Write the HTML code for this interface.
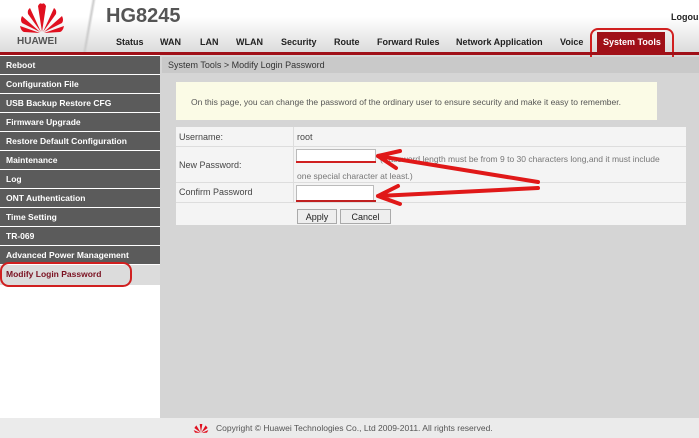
<!DOCTYPE html><html><head><style>
*{margin:0;padding:0;box-sizing:border-box}
body{width:699px;height:438px;overflow:hidden;font-family:"Liberation Sans",sans-serif;background:#d5d5d5;position:relative;font-size:9px}
.a{position:absolute}
#hdr{left:0;top:0;width:699px;height:56px;background:linear-gradient(#fff,#fff 30%,#d8d8d8)}
.nav{top:37px;font-weight:bold;font-size:9px;color:#222}
.side{left:0;width:160px;height:18px;background:#5b5b5b;color:#fff;font-weight:bold;font-size:8.5px;padding:4px 0 0 6px}
td{font-size:9px;color:#444}
</style></head><body>
<div id="hdr" class="a"></div>
<svg class="a" style="left:18px;top:2px" width="48" height="32" viewBox="0 0 48 32"><g fill="#e01020">
<path d="M24 30 L20 4 Q22 0 24 2 Z"/><path d="M24 30 L28 4 Q26 0 24 2 Z"/>
<path d="M23 30 L12 6 Q9 8 10 12 Z"/><path d="M25 30 L36 6 Q39 8 38 12 Z"/>
<path d="M22 30 L4 14 Q2 18 4 21 Z"/><path d="M26 30 L44 14 Q46 18 44 21 Z"/>
<path d="M22 31 L2 24 Q3 29 6 30 Z"/><path d="M26 31 L46 24 Q45 29 42 30 Z"/></g></svg>
<div class="a" style="left:17px;top:36px;font-weight:bold;font-size:10px;color:#555">HUAWEI</div>
<div class="a" style="left:82px;top:0;width:14px;height:54px;background:linear-gradient(100deg,transparent 40%,#ccc 50%,transparent 60%)"></div>
<div class="a" style="left:106px;top:5px;font-weight:bold;font-size:20px;color:#555">HG8245</div>
<div class="a" style="left:671px;top:12px;font-weight:bold;font-size:9px;color:#222">Logou</div>
<div class="a nav" style="left:116px">Status</div><div class="a nav" style="left:160px">WAN</div><div class="a nav" style="left:200px">LAN</div><div class="a nav" style="left:236px">WLAN</div><div class="a nav" style="left:281px">Security</div><div class="a nav" style="left:334px">Route</div><div class="a nav" style="left:377px">Forward Rules</div><div class="a nav" style="left:456px">Network Application</div><div class="a nav" style="left:560px">Voice</div>
<div class="a" style="left:597px;top:32px;width:68px;height:21px;background:#a01018;color:#fff;font-weight:bold;font-size:9px;padding:5px 0 0 6px">System Tools</div>
<div class="a" style="left:590px;top:28px;width:84px;height:37px;border:2px solid #d02020;border-radius:8px"></div>
<div class="a" style="left:0;top:52px;width:699px;height:3px;background:#a01018"></div>
<div class="a" style="left:0;top:55px;width:160px;height:363px;background:#fff"></div>
<div class="a side" style="top:56px">Reboot</div><div class="a side" style="top:75px">Configuration File</div><div class="a side" style="top:94px">USB Backup Restore CFG</div><div class="a side" style="top:113px">Firmware Upgrade</div><div class="a side" style="top:132px">Restore Default Configuration</div><div class="a side" style="top:151px">Maintenance</div><div class="a side" style="top:170px">Log</div><div class="a side" style="top:189px">ONT Authentication</div><div class="a side" style="top:208px">Time Setting</div><div class="a side" style="top:227px">TR-069</div><div class="a side" style="top:246px">Advanced Power Management</div>
<div class="a side" style="top:265px;height:20px;background:#dcdcdc;color:#7a1020">Modify Login Password</div>
<div class="a" style="left:0;top:262px;width:132px;height:25px;border:2px solid #d02020;border-radius:9px"></div>
<div class="a" style="left:162px;top:57px;width:537px;height:16px;background:#c9c9c9;color:#333;padding:3px 0 0 6px">System Tools &gt; Modify Login Password</div>
<div class="a" style="left:176px;top:82px;width:481px;height:38px;background:#fbfbe6;color:#555;padding:15px 0 0 15px;font-size:8.5px">On this page, you can change the password of the ordinary user to ensure security and make it easy to remember.</div>
<div class="a" style="left:176px;top:127px;width:510px;height:98px;background:#f4f4f4"></div>
<div class="a" style="left:176px;top:146px;width:510px;height:1px;background:#ddd"></div>
<div class="a" style="left:176px;top:182px;width:510px;height:1px;background:#ddd"></div>
<div class="a" style="left:176px;top:202px;width:510px;height:1px;background:#ddd"></div>
<div class="a" style="left:293px;top:127px;width:1px;height:75px;background:#ddd"></div>
<div class="a" style="left:179px;top:132px;color:#444">Username:</div>
<div class="a" style="left:297px;top:132px;color:#444">root</div>
<div class="a" style="left:179px;top:160px;color:#444">New Password:</div>
<div class="a" style="left:296px;top:149px;width:80px;height:14px;background:#fff;border:1px solid #bbb"></div>
<div class="a" style="left:380px;top:154px;color:#777;font-size:8.5px">(Password length must be from 9 to 30 characters long,and it must include</div>
<div class="a" style="left:297px;top:171px;color:#777;font-size:8.5px">one special character at least.)</div>
<div class="a" style="left:179px;top:187px;color:#444">Confirm Password</div>
<div class="a" style="left:296px;top:185px;width:78px;height:16px;background:#fff;border:1px solid #bbb"></div>
<div class="a" style="left:296px;top:161px;width:80px;height:2px;background:#d02020"></div>
<div class="a" style="left:296px;top:200px;width:80px;height:2px;background:#c02020"></div>
<svg class="a" style="left:370px;top:148px" width="200" height="60"><g stroke="#e01818" stroke-width="4" fill="none" stroke-linecap="round"><path d="M168 34 L8 8 M8 8 L30 3 M8 8 L26 20"/><path d="M168 40 L8 48 M8 48 L28 38 M8 48 L30 56"/></g></svg>
<div class="a" style="left:297px;top:209px;width:40px;height:15px;background:#eee;border:1px solid #aaa;text-align:center;padding-top:2px;color:#222">Apply</div>
<div class="a" style="left:340px;top:209px;width:51px;height:15px;background:#eee;border:1px solid #aaa;text-align:center;padding-top:2px;color:#222">Cancel</div>
<div class="a" style="left:0;top:418px;width:699px;height:20px;background:#ebebeb"></div>
<svg class="a" style="left:193px;top:422px" width="16" height="12" viewBox="0 0 48 32"><g fill="#e01020"><path d="M24 30 L20 4 L28 4 Z"/><path d="M23 30 L10 8 L4 16 Z"/><path d="M25 30 L38 8 L44 16 Z"/><path d="M22 31 L2 22 L6 30 Z"/><path d="M26 31 L46 22 L42 30 Z"/></g></svg>
<div class="a" style="left:216px;top:423px;color:#555;font-size:8.5px">Copyright © Huawei Technologies Co., Ltd 2009-2011. All rights reserved.</div>
</body></html>
